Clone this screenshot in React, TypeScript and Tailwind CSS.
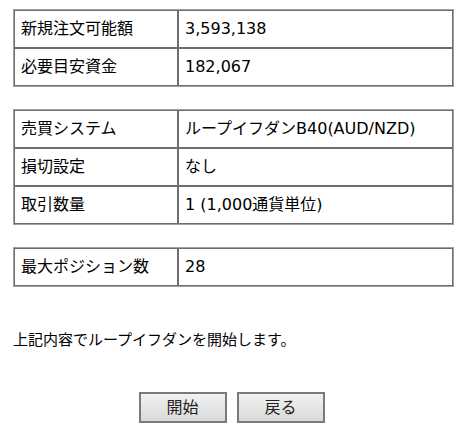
const fontStack = "font-['DejaVu_Sans','Noto_Sans_CJK_JP',sans-serif]";

type Row = { label: string; value: string };

const groups: Row[][] = [
  [
    { label: "新規注文可能額", value: "3,593,138" },
    { label: "必要目安資金", value: "182,067" },
  ],
  [
    { label: "売買システム", value: "ループイフダンB40(AUD/NZD)" },
    { label: "損切設定", value: "なし" },
    { label: "取引数量", value: "1 (1,000通貨単位)" },
  ],
  [{ label: "最大ポジション数", value: "28" }],
];

function InfoTable({ rows }: { rows: Row[] }) {
  return (
    <table className="w-[441px] border-separate border-spacing-0 border border-[#a0a0a0] text-[16px] text-black">
      <tbody>
        {rows.map((r) => (
          <tr key={r.label}>
            <td className="w-[164px] h-[38px] border border-[#6e6e6e] px-[6px] py-0 align-middle whitespace-nowrap">
              {r.label}
            </td>
            <td className="h-[38px] border border-[#6e6e6e] px-[6px] py-0 align-middle whitespace-nowrap">
              {r.value}
            </td>
          </tr>
        ))}
      </tbody>
    </table>
  );
}

export default function App() {
  return (
    <div className={`w-[476px] h-[439px] bg-white pl-[13px] pt-[9px] ${fontStack}`}>
      <div className="flex flex-col gap-[22px]">
        {groups.map((g, i) => (
          <InfoTable key={i} rows={g} />
        ))}
      </div>

      <p className="mt-[43px] text-[15px] leading-[20px] text-black">
        上記内容でループイフダンを開始します。
      </p>

      <div className="w-[441px] pr-[4px] mt-[42px] flex justify-center gap-[10px]">
        <button className="w-[88px] h-[31px] border-2 border-[#7a7a7a] bg-gradient-to-b from-[#f2f2f2] to-[#d9d9d9] text-[16px] text-[#222]">
          開始
        </button>
        <button className="w-[88px] h-[31px] border-2 border-[#7a7a7a] bg-gradient-to-b from-[#f2f2f2] to-[#d9d9d9] text-[16px] text-[#222]">
          戻る
        </button>
      </div>
    </div>
  );
}
